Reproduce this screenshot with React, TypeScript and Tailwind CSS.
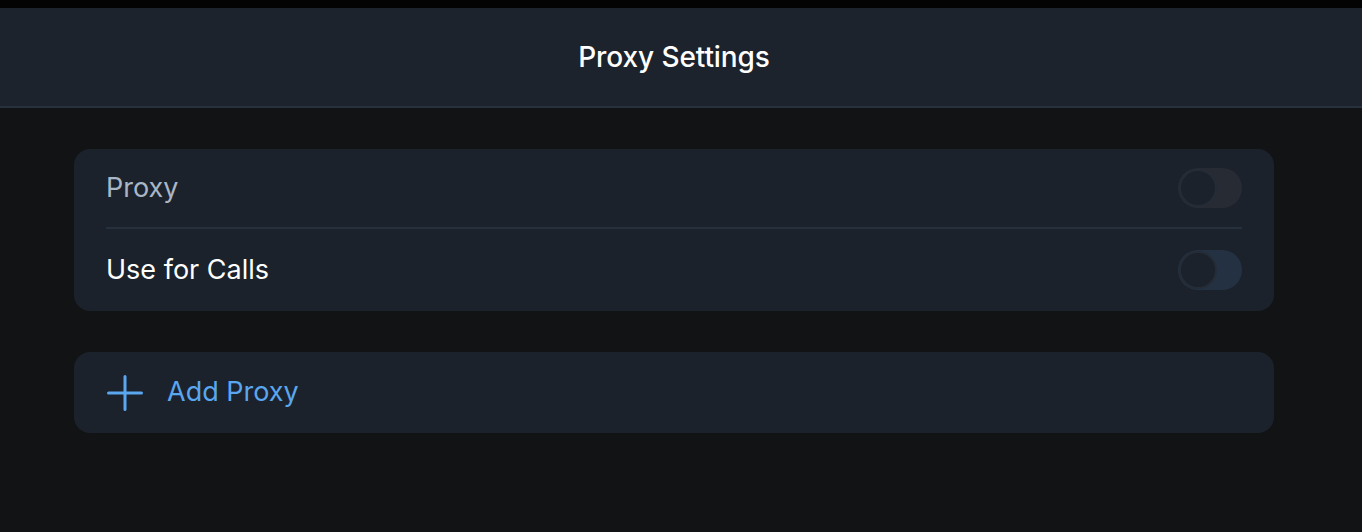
import { useState } from 'react';

function Toggle({ on, onChange, track }: { on: boolean; onChange: () => void; track: string }) {
  return (
    <button
      onClick={onChange}
      className={`relative w-[64px] h-[40px] rounded-full cursor-pointer ${on ? 'bg-[#5aa6ef]' : track}`}
    >
      <span
        className={`absolute top-[1px] w-[38px] h-[38px] rounded-full bg-[#1b222b] border-2 border-[#252c36] transition-all ${on ? 'left-[25px]' : 'left-[1px]'}`}
      />
    </button>
  );
}

export default function App() {
  const [proxy, setProxy] = useState(false);
  const [calls, setCalls] = useState(false);

  return (
    <div className="w-[1362px] h-[532px] bg-[#121315] flex flex-col font-['Inter','Noto_Sans',sans-serif]">
      <div className="h-[8px] bg-[#030303] shrink-0" />
      <div className="h-[100px] shrink-0 bg-[#1c232c] border-b-2 border-[#27313d] flex items-center justify-center pr-[14px]">
        <span className="text-[28px] font-medium text-white tracking-[-0.1px]">Proxy Settings</span>
      </div>

      <div className="w-[1200px] ml-[74px] pt-[41px] flex flex-col gap-[41px]">
        <div className="bg-[#1b222b] rounded-[16px] px-[32px]">
          <div className="h-[80px] flex items-center justify-between border-b-2 border-[#27313d]">
            <span className="text-[27px] text-[#a9b6c6]">Proxy</span>
            <Toggle on={proxy} onChange={() => setProxy(!proxy)} track="bg-[#272b34]" />
          </div>
          <div className="h-[82px] flex items-center justify-between">
            <span className="text-[27px] text-white">Use for Calls</span>
            <Toggle on={calls} onChange={() => setCalls(!calls)} track="bg-[#243142]" />
          </div>
        </div>

        <div className="bg-[#1b222b] rounded-[16px] h-[81px] px-[33px] flex items-center gap-[24px] cursor-pointer">
          <svg width="36" height="36" viewBox="0 0 36 36" fill="none">
            <path d="M18 1.5v33M1.5 18h33" stroke="#5aa6ef" strokeWidth="3" strokeLinecap="round" />
          </svg>
          <span className="text-[27px] text-[#5aa6ef]">Add Proxy</span>
        </div>
      </div>
    </div>
  );
}
